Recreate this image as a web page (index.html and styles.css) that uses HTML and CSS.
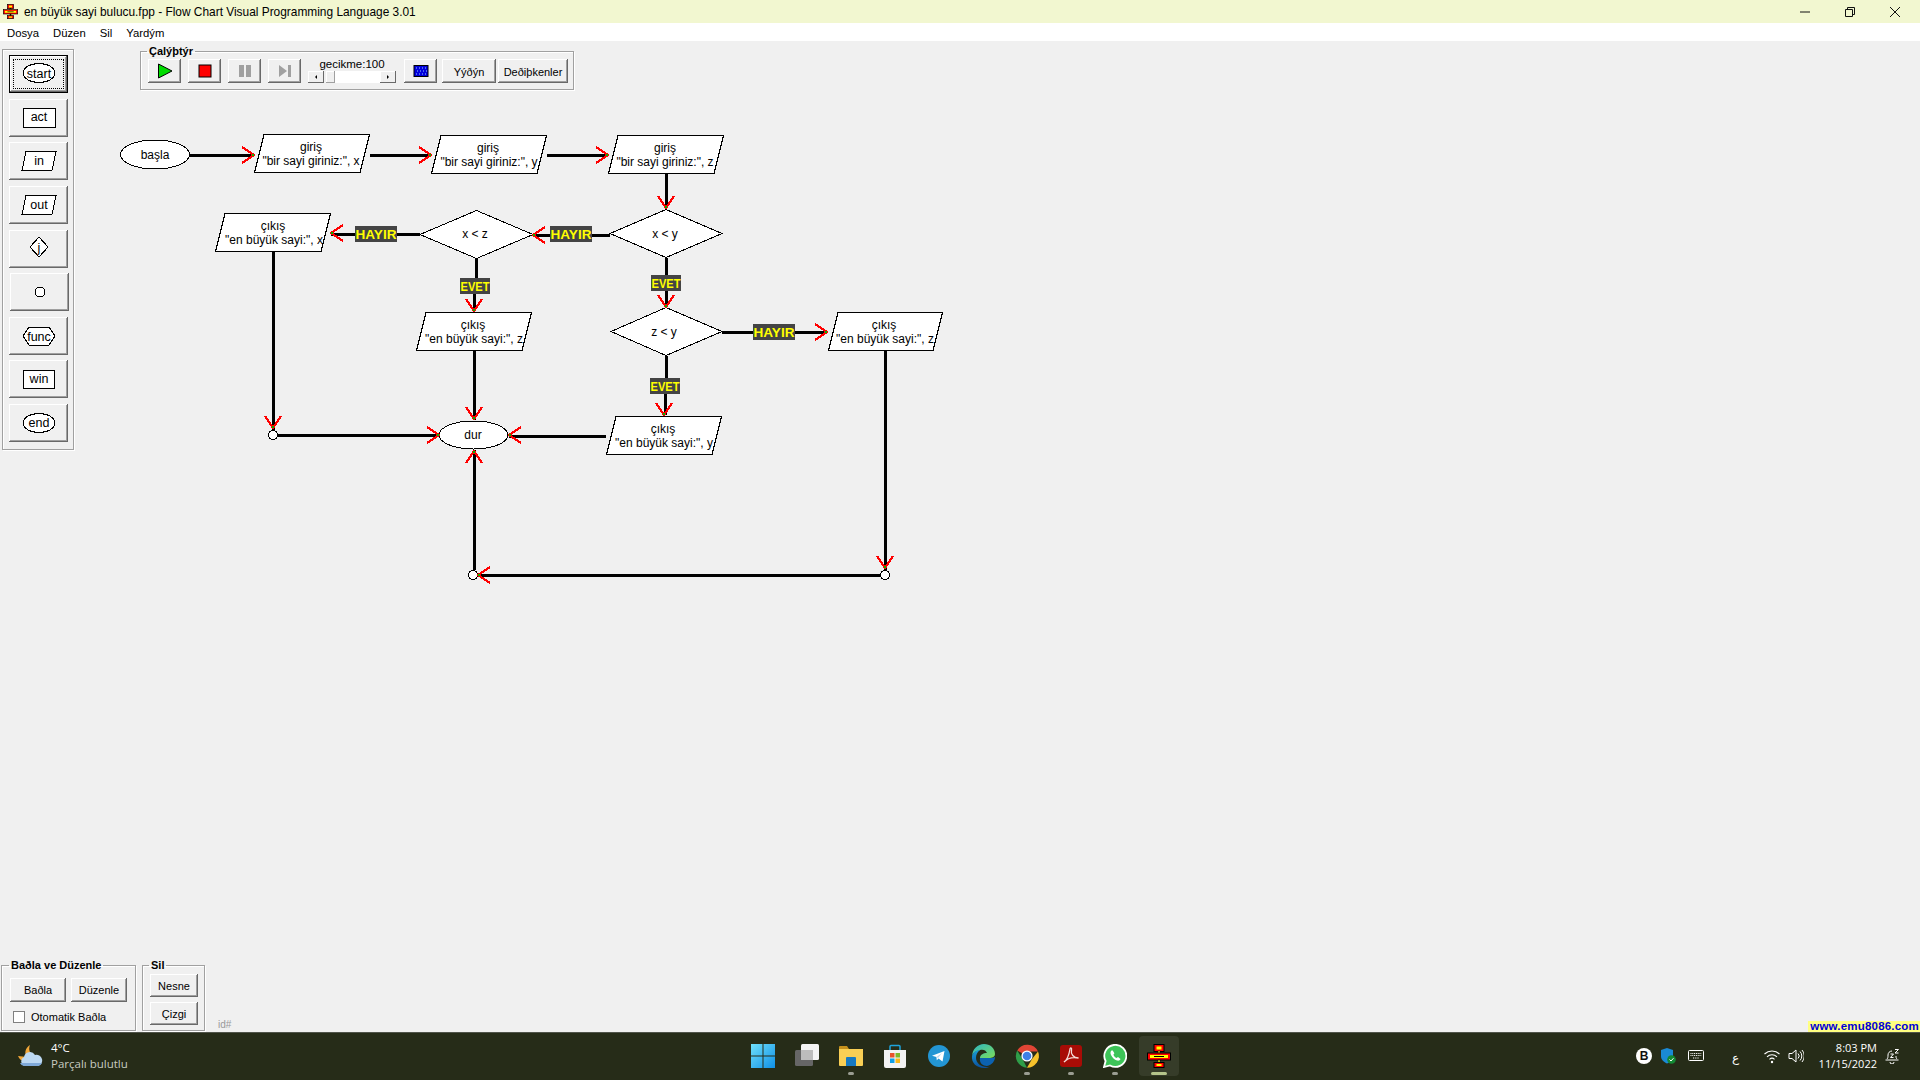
FILE: index.html
```html
<!DOCTYPE html>
<html>
  <head>
    <title>Flow Chart Visual Programming Language</title>
    <link rel="stylesheet" href="styles.css">
  </head>
  <body>
    <svg class="defs" width="0" height="0">
      <defs>
        <g id="app-icon">
          <rect x="7" y="0.5" width="10" height="7" fill="#f00" stroke="#000"/>
          <rect x="9.5" y="2.5" width="5" height="3" fill="#ff0"/>
          <rect x="11" y="7" width="2" height="3" fill="#ff0" stroke="#000" stroke-width=".5"/>
          <rect x="0.5" y="9" width="23" height="7" fill="#f00" stroke="#000"/>
          <rect x="3" y="11" width="18" height="3" fill="#ff0"/>
          <rect x="7" y="12" width="10" height="1" fill="#000"/>
          <rect x="11" y="16" width="2" height="3" fill="#ff0" stroke="#000" stroke-width=".5"/>
          <rect x="7" y="18.5" width="10" height="5" fill="#f00" stroke="#000"/>
          <rect x="9.5" y="20" width="5" height="2" fill="#ff0"/>
        </g>
        <g id="arrow">
          <path d="M-12 -8L0 0L-12 8" fill="none" stroke="#f00" stroke-width="2"/>
          <rect x="-2" y="-1" width="2" height="2" fill="#0b0"/>
        </g>
        <linearGradient id="tile" x1="0" y1="0" x2="1" y2="1">
          <stop offset="0" stop-color="#6fe0fb"/>
          <stop offset="1" stop-color="#0f8fe6"/>
        </linearGradient>
        <linearGradient id="edge-blue" x1="0" y1="0" x2="0" y2="1">
          <stop offset="0" stop-color="#1a9fd8"/>
          <stop offset="1" stop-color="#0a4f9c"/>
        </linearGradient>
        <linearGradient id="edge-green" x1="0" y1="0" x2="1" y2="1">
          <stop offset="0" stop-color="#2bb6c6"/>
          <stop offset="1" stop-color="#7cdc5a"/>
        </linearGradient>
      </defs>
    </svg>

    <div class="titlebar">
      <svg class="title-icon" viewBox="0 0 24 24"><use href="#app-icon"/></svg>
      <span class="title-text">en büyük sayi bulucu.fpp - Flow Chart Visual Programming Language 3.01</span>
      <div class="window-buttons">
        <svg class="win-btn" viewBox="0 0 10 10"><path d="M0 5H10" stroke="#111" fill="none"/></svg>
        <svg class="win-btn" viewBox="0 0 10 10"><path d="M.5 2.5h7v7h-7zM2.5 2.5v-2h7v7h-2" stroke="#111" fill="none"/></svg>
        <svg class="win-btn" viewBox="0 0 10 10"><path d="M0 0L10 10M10 0L0 10" stroke="#111" fill="none"/></svg>
      </div>
    </div>

    <div class="menubar">
      <span class="menu-item">Dosya</span>
      <span class="menu-item">Düzen</span>
      <span class="menu-item">Sil</span>
      <span class="menu-item">Yardým</span>
    </div>

    <div class="workspace">
      <div class="top-row">
        <div class="palette">
          <div class="btn tool tool-selected">
            <span class="focus-box">
              <svg class="tool-svg" viewBox="0 0 40 24"><ellipse cx="20" cy="11" rx="16" ry="9.5"/><text x="20" y="15.5">start</text></svg>
            </span>
          </div>
          <div class="btn tool">
            <svg class="tool-svg" viewBox="0 0 40 24"><rect x="4" y="2.5" width="32" height="19"/><text x="20" y="14.5">act</text></svg>
          </div>
          <div class="btn tool">
            <svg class="tool-svg" viewBox="0 0 40 24"><path d="M7 2.5H37L33 21.5H3Z"/><text x="20" y="15.5">in</text></svg>
          </div>
          <div class="btn tool">
            <svg class="tool-svg" viewBox="0 0 40 24"><path d="M7 2.5H37L33 21.5H3Z"/><text x="20" y="16">out</text></svg>
          </div>
          <div class="btn tool">
            <svg class="tool-svg" viewBox="0 0 40 24"><path d="M20 0L29 10L20 20L11 10Z"/><text x="20" y="14.5">j</text></svg>
          </div>
          <div class="btn tool tool-shift">
            <svg class="tool-svg" viewBox="0 0 40 24"><circle cx="20" cy="12" r="5"/></svg>
          </div>
          <div class="btn tool">
            <svg class="tool-svg" viewBox="0 0 40 24"><path d="M10 3H30L36 12L30 21H10L4 12Z"/><text x="20" y="16.5">func</text></svg>
          </div>
          <div class="btn tool">
            <svg class="tool-svg" viewBox="0 0 40 24"><rect x="4" y="3" width="31" height="18"/><text x="20" y="16">win</text></svg>
          </div>
          <div class="btn tool">
            <svg class="tool-svg" viewBox="0 0 40 24"><ellipse cx="20" cy="12" rx="16" ry="9.5"/><text x="20" y="16">end</text></svg>
          </div>
        </div>

        <fieldset class="group run-group">
          <legend>Çalýþtýr</legend>
          <div class="run-row">
            <div class="btn run-btn"><svg class="run-icon" viewBox="0 0 16 16"><path d="M1.5 1L15 8L1.5 15Z" fill="#0d0" stroke="#000"/></svg></div>
            <div class="btn run-btn"><svg class="run-icon" viewBox="0 0 16 16"><rect x="2" y="2" width="12" height="12" fill="#f00" stroke="#000"/></svg></div>
            <div class="btn run-btn"><svg class="run-icon" viewBox="0 0 16 16"><path d="M2 2h5v12H2zM9 2h5v12H9z" fill="#a0a0a0"/></svg></div>
            <div class="btn run-btn"><svg class="run-icon" viewBox="0 0 16 16"><path d="M2 2L10 8L2 14ZM11 2h3v12h-3z" fill="#a0a0a0"/></svg></div>
            <div class="delay">
              <span class="delay-label">gecikme:100</span>
              <div class="scroll">
                <span class="scroll-btn"><i class="tri-left"></i></span>
                <span class="scroll-thumb"></span>
                <span class="scroll-track"></span>
                <span class="scroll-btn"><i class="tri-right"></i></span>
              </div>
            </div>
            <div class="btn run-btn"><svg class="run-icon" viewBox="0 0 16 16"><rect x="1" y="2.5" width="14" height="11" fill="#00d" stroke="#000"/><path d="M3 5h1M6 5h1M9 5h1M12 5h1M4 8h1M7 8h1M10 8h1M13 8h1M3 11h1M6 11h1M9 11h1M12 11h1" stroke="#9cf"/></svg></div>
            <div class="btn stack-btn">Yýðýn</div>
            <div class="btn vars-btn">Deðiþkenler</div>
          </div>
        </fieldset>
      </div>

      <div class="bottom-row">
        <fieldset class="group connect-group">
          <legend>Baðla ve Düzenle</legend>
          <div class="connect-row">
            <div class="btn connect-btn">Baðla</div>
            <div class="btn connect-btn">Düzenle</div>
          </div>
          <div class="check-row">
            <span class="check"></span>
            <span>Otomatik Baðla</span>
          </div>
        </fieldset>
        <fieldset class="group delete-group">
          <legend>Sil</legend>
          <div class="btn delete-btn">Nesne</div>
          <div class="btn delete-btn">Çizgi</div>
        </fieldset>
        <span class="id-label">id#</span>
      </div>

      <span class="emu-link">www.emu8086.com</span>
    </div>

    <svg class="diagram" width="1000" height="600" viewBox="0 0 1000 600">
      <!-- connectors -->
      <g class="wires">
        <path d="M189 155H253"/>
        <path d="M370 155H430"/>
        <path d="M547 155H607"/>
        <path d="M666 174V208"/>
        <path d="M610 235H533"/>
        <path d="M420 234H331"/>
        <path d="M476 259V279M474 294V311"/>
        <path d="M666 258V306"/>
        <path d="M666 356V378M665 394V415"/>
        <path d="M722 332H827"/>
        <path d="M474 351V420"/>
        <path d="M606 436H509"/>
        <path d="M885 351V570"/>
        <path d="M881 575H478"/>
        <path d="M474 570V450"/>
        <path d="M273 252V431"/>
        <path d="M278 435H438"/>
      </g>

      <!-- nodes -->
      <g class="nodes">
        <ellipse cx="155" cy="154.5" rx="34.5" ry="14.5"/>
        <path d="M264 134.5H369.5L360 172.5H254.5Z"/>
        <path d="M441 135.5H546.5L537 173.5H431.5Z"/>
        <path d="M618 135.5H723.5L714 173.5H608.5Z"/>
        <path d="M225 213.5H330.5L321 251.5H215.5Z"/>
        <path d="M476.5 210.5L533 234.5L476.5 258.5L420 234.5Z"/>
        <path d="M666 209.5L722 233.5L666 257.5L610 233.5Z"/>
        <path d="M426 312.5H531.5L522 350.5H416.5Z"/>
        <path d="M666 307.5L722 331.5L666 355.5L611 331.5Z"/>
        <path d="M838 312.5H942.5L933 350.5H828.5Z"/>
        <path d="M616 416.5H721.5L712 454.5H606.5Z"/>
        <ellipse cx="473.5" cy="435" rx="34.5" ry="14"/>
        <circle cx="273" cy="435" r="4.5"/>
        <circle cx="473" cy="575" r="4.5"/>
        <circle cx="885" cy="575" r="4.5"/>
      </g>

      <!-- node text -->
      <g class="node-text">
        <text x="155" y="159">başla</text>
        <text x="311" y="151">giriş</text>
        <text x="311" y="165">"bir sayi giriniz:", x</text>
        <text x="488" y="152">giriş</text>
        <text x="489" y="166">"bir sayi giriniz:", y</text>
        <text x="665" y="152">giriş</text>
        <text x="665" y="166">"bir sayi giriniz:", z</text>
        <text x="273" y="230">çıkış</text>
        <text x="274" y="244">"en büyük sayi:", x</text>
        <text x="475" y="238">x &lt; z</text>
        <text x="665" y="238">x &lt; y</text>
        <text x="473" y="329">çıkış</text>
        <text x="474" y="343">"en büyük sayi:", z</text>
        <text x="664" y="336">z &lt; y</text>
        <text x="884" y="329">çıkış</text>
        <text x="885" y="343">"en büyük sayi:", z</text>
        <text x="663" y="433">çıkış</text>
        <text x="664" y="447">"en büyük sayi:", y</text>
        <text x="473" y="439">dur</text>
      </g>

      <!-- arrow heads -->
      <use href="#arrow" transform="translate(254 155)"/>
      <use href="#arrow" transform="translate(431 155)"/>
      <use href="#arrow" transform="translate(608 155)"/>
      <use href="#arrow" transform="translate(666 208) rotate(90)"/>
      <use href="#arrow" transform="translate(533 235) rotate(180)"/>
      <use href="#arrow" transform="translate(331 233) rotate(180)"/>
      <use href="#arrow" transform="translate(474 311) rotate(90)"/>
      <use href="#arrow" transform="translate(666 307) rotate(90)"/>
      <use href="#arrow" transform="translate(827 332)"/>
      <use href="#arrow" transform="translate(664 415) rotate(90)"/>
      <use href="#arrow" transform="translate(474 419) rotate(90)"/>
      <use href="#arrow" transform="translate(509 435) rotate(180)"/>
      <use href="#arrow" transform="translate(439 435)"/>
      <use href="#arrow" transform="translate(474 451) rotate(-90)"/>
      <use href="#arrow" transform="translate(478 575) rotate(180)"/>
      <use href="#arrow" transform="translate(885 568) rotate(90)"/>
      <use href="#arrow" transform="translate(273 428) rotate(90)"/>

      <!-- branch labels -->
      <g class="branch">
        <rect x="355" y="226" width="42" height="16"/>
        <text x="376" y="239" textLength="41" lengthAdjust="spacingAndGlyphs">HAYIR</text>
        <rect x="550" y="226" width="42" height="16"/>
        <text x="571" y="239" textLength="41" lengthAdjust="spacingAndGlyphs">HAYIR</text>
        <rect x="753" y="324" width="42" height="16"/>
        <text x="774" y="337" textLength="41" lengthAdjust="spacingAndGlyphs">HAYIR</text>
        <rect x="460" y="278" width="30" height="16"/>
        <text x="475" y="291" textLength="29" lengthAdjust="spacingAndGlyphs">EVET</text>
        <rect x="651" y="275" width="30" height="16"/>
        <text x="666" y="288" textLength="29" lengthAdjust="spacingAndGlyphs">EVET</text>
        <rect x="650" y="378" width="30" height="16"/>
        <text x="665" y="391" textLength="29" lengthAdjust="spacingAndGlyphs">EVET</text>
      </g>
    </svg>

    <div class="taskbar">
      <div class="weather">
        <svg class="weather-icon" viewBox="0 0 26 24">
          <path d="M13 1C8 4 7 10 10 13L1 12C3 17 8 18 12 17L17 11C13 10 11 6 13 1Z" fill="#f2a83a"/>
          <path d="M7 22a5 5 0 0 1 0-9a6 6 0 0 1 11-2a5.500 5.500 0 0 1 3 11Z" fill="#bcd8f2"/>
          <path d="M7 22a5 5 0 0 1-4-3h22a5 5 0 0 1-4 3Z" fill="#7fa9d8"/>
        </svg>
        <div class="weather-text">
          <span class="temp">4°C</span>
          <span class="forecast">Parçalı bulutlu</span>
        </div>
      </div>

      <div class="task-icons">
        <div class="task-item">
          <svg class="task-svg" viewBox="0 0 24 24"><path d="M0 0h11.500v11.500H0zM12.500 0H24v11.500H12.500zM0 12.500h11.500V24H0zM12.500 12.500H24V24H12.500z" fill="url(#tile)"/></svg>
        </div>
        <div class="task-item">
          <svg class="task-svg" viewBox="0 0 24 24"><rect x="6" y="0" width="18" height="16" rx="1.500" fill="#f4f4f4"/><rect x="0" y="6" width="18" height="16" rx="1.500" fill="#666"/><rect x="6" y="6" width="12" height="10" fill="#bdbdbd"/></svg>
        </div>
        <div class="task-item">
          <svg class="task-svg" viewBox="0 0 24 24"><path d="M0 3a1 1 0 0 1 1-1h7l2 3H0Z" fill="#c4901c"/><path d="M0 5h24v16a1 1 0 0 1-1 1H1a1 1 0 0 1-1-1Z" fill="#f8cf55"/><path d="M7 14a1 1 0 0 1 1-1h8a1 1 0 0 1 1 1v8H7Z" fill="#1679c2"/></svg>
          <span class="run-dot"></span>
        </div>
        <div class="task-item">
          <svg class="task-svg" viewBox="0 0 24 24"><path d="M7 6V2.500a1 1 0 0 1 1-1h8a1 1 0 0 1 1 1V6" fill="none" stroke="#1ea3dc" stroke-width="1.500"/><path d="M1 6h22v16a2 2 0 0 1-2 2H3a2 2 0 0 1-2-2Z" fill="#f3f3f3"/><path d="M7 9h4.500v4.500H7z" fill="#e8542c"/><path d="M12.500 9H17v4.500h-4.500z" fill="#7fba2a"/><path d="M7 14.500h4.500V19H7z" fill="#10a0e8"/><path d="M12.500 14.500H17V19h-4.500z" fill="#fbb81a"/></svg>
        </div>
        <div class="task-item">
          <svg class="task-svg" viewBox="0 0 24 24"><circle cx="12" cy="12" r="11" fill="#2396d4"/><path d="M5 11.800L17.500 7L15.500 17.500L11.500 14.500L9.800 16.200L9.400 13Z" fill="#fff"/><path d="M9.400 13L15 9L11 14Z" fill="#b8d8ee"/></svg>
        </div>
        <div class="task-item">
          <svg class="task-svg" viewBox="0 0 24 24"><path d="M1 13C1 5 7 0 13 0c6 0 11 4 11 10c0 3-3 4-6 4H9c0-3 3-5 7-5c-1-3-4-4-7-3C5 7 1 9 1 13Z" fill="url(#edge-green)"/><path d="M1 12c1-4 5-6 8-6c-3 2-4 5-4 8c0 5 5 9 11 9c1 0 2 0 3-.5C17 24 15 24 13 24C6 24 0 19 1 12Z" fill="url(#edge-blue)"/><path d="M9 14h9c2 0 5 0 6-1c0 4-3 8-8 9c-4 0-8-3-7-8Z" fill="#0c62b0"/></svg>
        </div>
        <div class="task-item">
          <svg class="task-svg" viewBox="0 0 24 24"><path d="M12 12L2.200 6.500A11.800 11.800 0 0 1 23 7.500H12Z" fill="#e04535"/><path d="M12 23.800A11.800 11.800 0 0 1 2.200 6.500L7.500 15Z" fill="#2f9e49"/><path d="M23 7.500A11.800 11.800 0 0 1 12 23.800L17 15Z" fill="#f6c22b"/><circle cx="12" cy="12" r="5.600" fill="#fff"/><circle cx="12" cy="12" r="4.300" fill="#3f7fe6"/></svg>
          <span class="run-dot"></span>
        </div>
        <div class="task-item">
          <svg class="task-svg" viewBox="0 0 24 24"><rect x="1" y="1" width="22" height="22" rx="3" fill="#a80c06"/><path d="M5 18c3-2 5-7 6-13c.5-2 2-1 1.500 1c-1 4 2 8 7 8c-5-1-11 0-14.500 4Z" fill="none" stroke="#f4dcd8" stroke-width="1.300"/></svg>
          <span class="run-dot"></span>
        </div>
        <div class="task-item">
          <svg class="task-svg" viewBox="0 0 24 24"><path d="M1 23l1.600-6A11 11 0 1 1 7 21.500Z" fill="#3dc458" stroke="#fff" stroke-width="1.800"/><path d="M8.500 6.500c-1 1-1.500 2.500-.5 4.500c1.200 2.500 3.500 4.800 6 5.500c1.800.5 3-.3 3.500-1.500l-2.500-2l-1.400 1c-1.500-.7-2.600-1.900-3.200-3.300l1-1.400l-1.700-2.800Z" fill="#fff"/></svg>
          <span class="run-dot"></span>
        </div>
        <div class="task-item task-active">
          <svg class="task-svg" viewBox="0 0 24 24"><use href="#app-icon"/></svg>
          <span class="run-bar"></span>
        </div>
      </div>

      <div class="tray">
        <span class="tray-item tray-b"><b class="b-badge">B</b></span>
        <span class="tray-item tray-shield">
          <svg class="tray-svg" viewBox="0 0 16 16"><path d="M7 0l6 2v6c0 4-3 6-6 7.500C4 14 1 12 1 8V2Z" fill="#1a8ad6"/><circle cx="11.500" cy="11.500" r="4.300" fill="#138a34"/><path d="M9.500 11.500l1.500 1.500l2.500-2.800" stroke="#fff" fill="none"/></svg>
        </span>
        <span class="tray-item tray-keys">
          <svg class="keys-svg" viewBox="0 0 16 11"><rect x=".5" y=".5" width="15" height="10" rx="1" fill="none" stroke="#fff"/><path d="M2.500 3.500h11M2.500 5.500h11M5 8h6" stroke="#fff" stroke-dasharray="1 .8"/></svg>
        </span>
        <span class="tray-item tray-ime">ع</span>
        <span class="tray-item tray-wifi">
          <svg class="tray-svg" viewBox="0 0 16 16"><path d="M.5 6a11 11 0 0 1 15 0M3 8.800a7.300 7.300 0 0 1 10 0M5.500 11.300a3.700 3.700 0 0 1 5 0" fill="none" stroke="#fff" stroke-width="1.100"/><circle cx="8" cy="14" r="1.200" fill="#fff"/></svg>
        </span>
        <span class="tray-item tray-volume">
          <svg class="tray-svg" viewBox="0 0 16 16"><path d="M1 5.500h3L8 2v12L4 10.500H1Z" fill="none" stroke="#fff"/><path d="M10 5.500a3.500 3.500 0 0 1 0 5M12 3.500a6.500 6.500 0 0 1 0 9M14 2a9 9 0 0 1 0 12" fill="none" stroke="#fff"/></svg>
        </span>
        <div class="clock">
          <span>8:03 PM</span>
          <span>11/15/2022</span>
        </div>
        <span class="tray-item tray-bell">
          <svg class="tray-svg" viewBox="0 0 16 16"><path d="M3 11c1-1 1-2 1-4c0-2 1.500-4 4-4M13 11c-1-1-1-1.500-1-3M1.500 12h13M6 14a2 2 0 0 0 4 0" fill="none" stroke="#fff"/><path d="M6.500 6h3l-3 3.500h3M11 1.500h3.500l-3.500 3.500h3.500" fill="none" stroke="#fff"/></svg>
        </span>
      </div>
    </div>
  </body>
</html>
```

FILE: styles.css
```css
* {
  box-sizing: border-box;
}

body {
  position: relative;
  display: flex;
  flex-direction: column;
  width: 1920px;
  height: 1080px;
  margin: 0;
  overflow: hidden;
  background-color: #f0f0f0;
  color: #000;
  font-family: "Liberation Sans", Arial, sans-serif;
  font-size: 11px;
}

.defs {
  position: absolute;
}

/* window chrome */
.titlebar {
  display: flex;
  align-items: center;
  height: 23px;
  padding-left: 3px;
  background-color: #f2f7d0;
}

.title-icon {
  width: 15px;
  height: 15px;
}

.title-text {
  margin-left: 6px;
  font-size: 11.9px;
}

.window-buttons {
  display: flex;
  gap: 35px;
  margin-left: auto;
  margin-right: 20px;
}

.win-btn {
  width: 10px;
  height: 10px;
}

.menubar {
  display: flex;
  align-items: center;
  height: 18px;
  padding: 2px 0 0 7px;
  gap: 14px;
  background-color: #fff;
}

.menu-item {
  font-size: 11.3px;
}

/* main area */
.workspace {
  position: relative;
  display: flex;
  flex-direction: column;
  justify-content: space-between;
  flex: 1;
  padding-bottom: 1px;
}

.top-row {
  display: flex;
  align-items: flex-start;
}

.bottom-row {
  display: flex;
  align-items: flex-end;
  margin-left: 1px;
}

.btn {
  display: flex;
  align-items: center;
  justify-content: center;
  background-color: #f0f0f0;
  box-shadow: inset -1px -1px #696969, inset 1px 1px #fff, inset -2px -2px #a0a0a0, inset 2px 2px #f0f0f0;
}

.palette {
  display: flex;
  flex-direction: column;
  justify-content: space-between;
  width: 72px;
  height: 401px;
  margin: 8px 0 0 2px;
  padding: 5px 5px 7px 6px;
  border: 1px solid #a0a0a0;
  box-shadow: inset 1px 1px #fff, 1px 1px #fff;
}

.tool {
  width: 59px;
  height: 38px;
}

.tool-shift {
  margin-left: 1px;
}

.tool-selected {
  border: 1px solid #000;
}

.focus-box {
  display: flex;
  align-items: center;
  justify-content: center;
  width: 51px;
  height: 30px;
  border: 1px dotted #000;
}

.tool-svg {
  width: 40px;
  height: 24px;
  overflow: visible;
  shape-rendering: crispEdges;
}

.tool-svg ellipse,
.tool-svg rect,
.tool-svg path,
.tool-svg circle {
  fill: #fff;
  stroke: #000;
}

.tool-svg text {
  font-size: 12.5px;
  text-anchor: middle;
}

.group {
  margin: 0;
  border: 1px solid #a0a0a0;
  box-shadow: inset 1px 1px #fff, 1px 1px #fff;
}

.group legend {
  margin-left: -1px;
  padding: 0 2px;
  height: 14px;
  line-height: 14px;
  font-size: 11px;
  font-weight: bold;
}

.run-group {
  width: 434px;
  height: 46px;
  margin: 3px 0 0 66px;
  padding: 1px 5px 0 7px;
}

.run-row {
  display: flex;
}

.run-btn {
  width: 33px;
  height: 24px;
  margin-right: 7px;
}

.run-icon {
  width: 16px;
  height: 16px;
}

.delay {
  display: flex;
  flex-direction: column;
  align-items: center;
  width: 88px;
  margin-right: 8px;
}

.delay-label {
  height: 13px;
  margin-top: -1px;
  line-height: 13px;
  font-size: 11.5px;
}

.scroll {
  display: flex;
  width: 88px;
  height: 12px;
}

.scroll-btn {
  display: flex;
  align-items: center;
  justify-content: center;
  width: 16px;
  background-color: #f0f0f0;
  box-shadow: inset -1px -1px #696969, inset 1px 1px #fff;
}

.scroll-thumb {
  width: 9px;
  margin-left: 2px;
  background-color: #f0f0f0;
  box-shadow: inset -1px -1px #a0a0a0, inset 1px 1px #fff;
}

.scroll-track {
  flex: 1;
  background-color: #fff;
}

.tri-left,
.tri-right {
  width: 0;
  height: 0;
  border-top: 2px solid transparent;
  border-bottom: 2px solid transparent;
}

.tri-left {
  border-right: 2px solid #000;
}

.tri-right {
  border-left: 2px solid #000;
}

.stack-btn {
  width: 54px;
  height: 24px;
  padding-top: 1px;
  margin-left: -2px;
  margin-right: 2px;
}

.vars-btn {
  width: 70px;
  height: 24px;
  padding-top: 1px;
}

.connect-group {
  width: 135px;
  height: 73px;
  padding: 6px 0 0 8px;
}

.connect-row {
  display: flex;
  gap: 5px;
}

.connect-btn {
  width: 56px;
  height: 24px;
}

.check-row {
  display: flex;
  align-items: center;
  gap: 6px;
  margin: 9px 0 0 3px;
}

.check {
  width: 12px;
  height: 12px;
  background-color: #fff;
  border: 1px solid #808080;
}

.delete-group {
  display: flex;
  flex-direction: column;
  width: 63px;
  height: 73px;
  margin-left: 6px;
  padding: 2px 0 0 7px;
}

.delete-btn {
  width: 48px;
  height: 25px;
  margin-bottom: 5px;
}

.id-label {
  margin: 0 0 1px 13px;
  font-size: 10px;
  color: #999;
}

.emu-link {
  position: absolute;
  right: 0;
  bottom: 0;
  height: 11px;
  padding: 0 1px 0 2px;
  background-color: #ffff80;
  color: #0000d8;
  font-size: 11.5px;
  font-weight: bold;
  line-height: 11px;
  letter-spacing: .2px;
}

/* flow chart canvas */
.diagram {
  position: absolute;
  top: 0;
  left: 0;
  shape-rendering: crispEdges;
}

.wires path {
  fill: none;
  stroke: #000;
  stroke-width: 3;
}

.nodes ellipse,
.nodes path,
.nodes circle {
  fill: #fff;
  stroke: #000;
}

.node-text text {
  font-size: 12px;
  text-anchor: middle;
}

.branch rect {
  fill: #444;
}

.branch text {
  fill: #ff0;
  font-size: 13px;
  font-weight: bold;
  text-anchor: middle;
}

/* taskbar */
.taskbar {
  display: grid;
  grid-template-columns: 1fr auto 1fr;
  align-items: center;
  height: 48px;
  border-top: 1px solid #50544a;
  background-color: #262c18;
  color: #fff;
}

.weather {
  display: flex;
  align-items: center;
  gap: 8px;
  padding: 0 0 2px 17px;
}

.weather-icon {
  width: 26px;
  height: 24px;
}

.weather-text {
  display: flex;
  flex-direction: column;
  font-family: "Open Sans", sans-serif;
  font-size: 11.5px;
  line-height: 16px;
}

.forecast {
  color: #c8cbc0;
}

.task-icons {
  display: flex;
  margin-left: 1px;
}

.task-item {
  position: relative;
  display: flex;
  align-items: center;
  justify-content: center;
  width: 44px;
  height: 47px;
  padding-bottom: 2px;
}

.task-svg {
  width: 24px;
  height: 24px;
}

.task-active::before {
  content: "";
  position: absolute;
  top: 3px;
  left: 2px;
  width: 40px;
  height: 40px;
  border-radius: 4px;
  background-color: #363c29;
}

.task-active .task-svg {
  position: relative;
}

.run-dot,
.run-bar {
  position: absolute;
  bottom: 5px;
  left: 19px;
  width: 6px;
  height: 3px;
  border-radius: 2px;
  background-color: #9a9d92;
}

.run-bar {
  left: 14px;
  width: 16px;
  background-color: #b4c48a;
}

.tray {
  display: flex;
  align-items: center;
  justify-content: flex-end;
  padding-right: 16px;
}

.tray-item {
  display: flex;
  align-items: center;
  justify-content: center;
  height: 47px;
  padding-bottom: 2px;
}

.tray-svg {
  width: 16px;
  height: 16px;
}

.tray-b,
.tray-shield,
.tray-bell {
  width: 24px;
}

.b-badge {
  display: flex;
  align-items: center;
  justify-content: center;
  width: 16px;
  height: 16px;
  border-radius: 50%;
  background-color: #fff;
  color: #111;
  font-size: 12px;
}

.tray-keys {
  width: 32px;
}

.keys-svg {
  width: 16px;
  height: 11px;
}

.tray-ime {
  width: 46px;
  padding-top: 4px;
  font-size: 12px;
}

.tray-wifi {
  width: 28px;
}

.tray-volume {
  width: 20px;
}

.clock {
  display: flex;
  flex-direction: column;
  align-items: flex-end;
  width: 74px;
  padding: 0 3px 1px 0;
  font-family: "Open Sans", sans-serif;
  font-size: 11px;
  line-height: 16px;
}
```
